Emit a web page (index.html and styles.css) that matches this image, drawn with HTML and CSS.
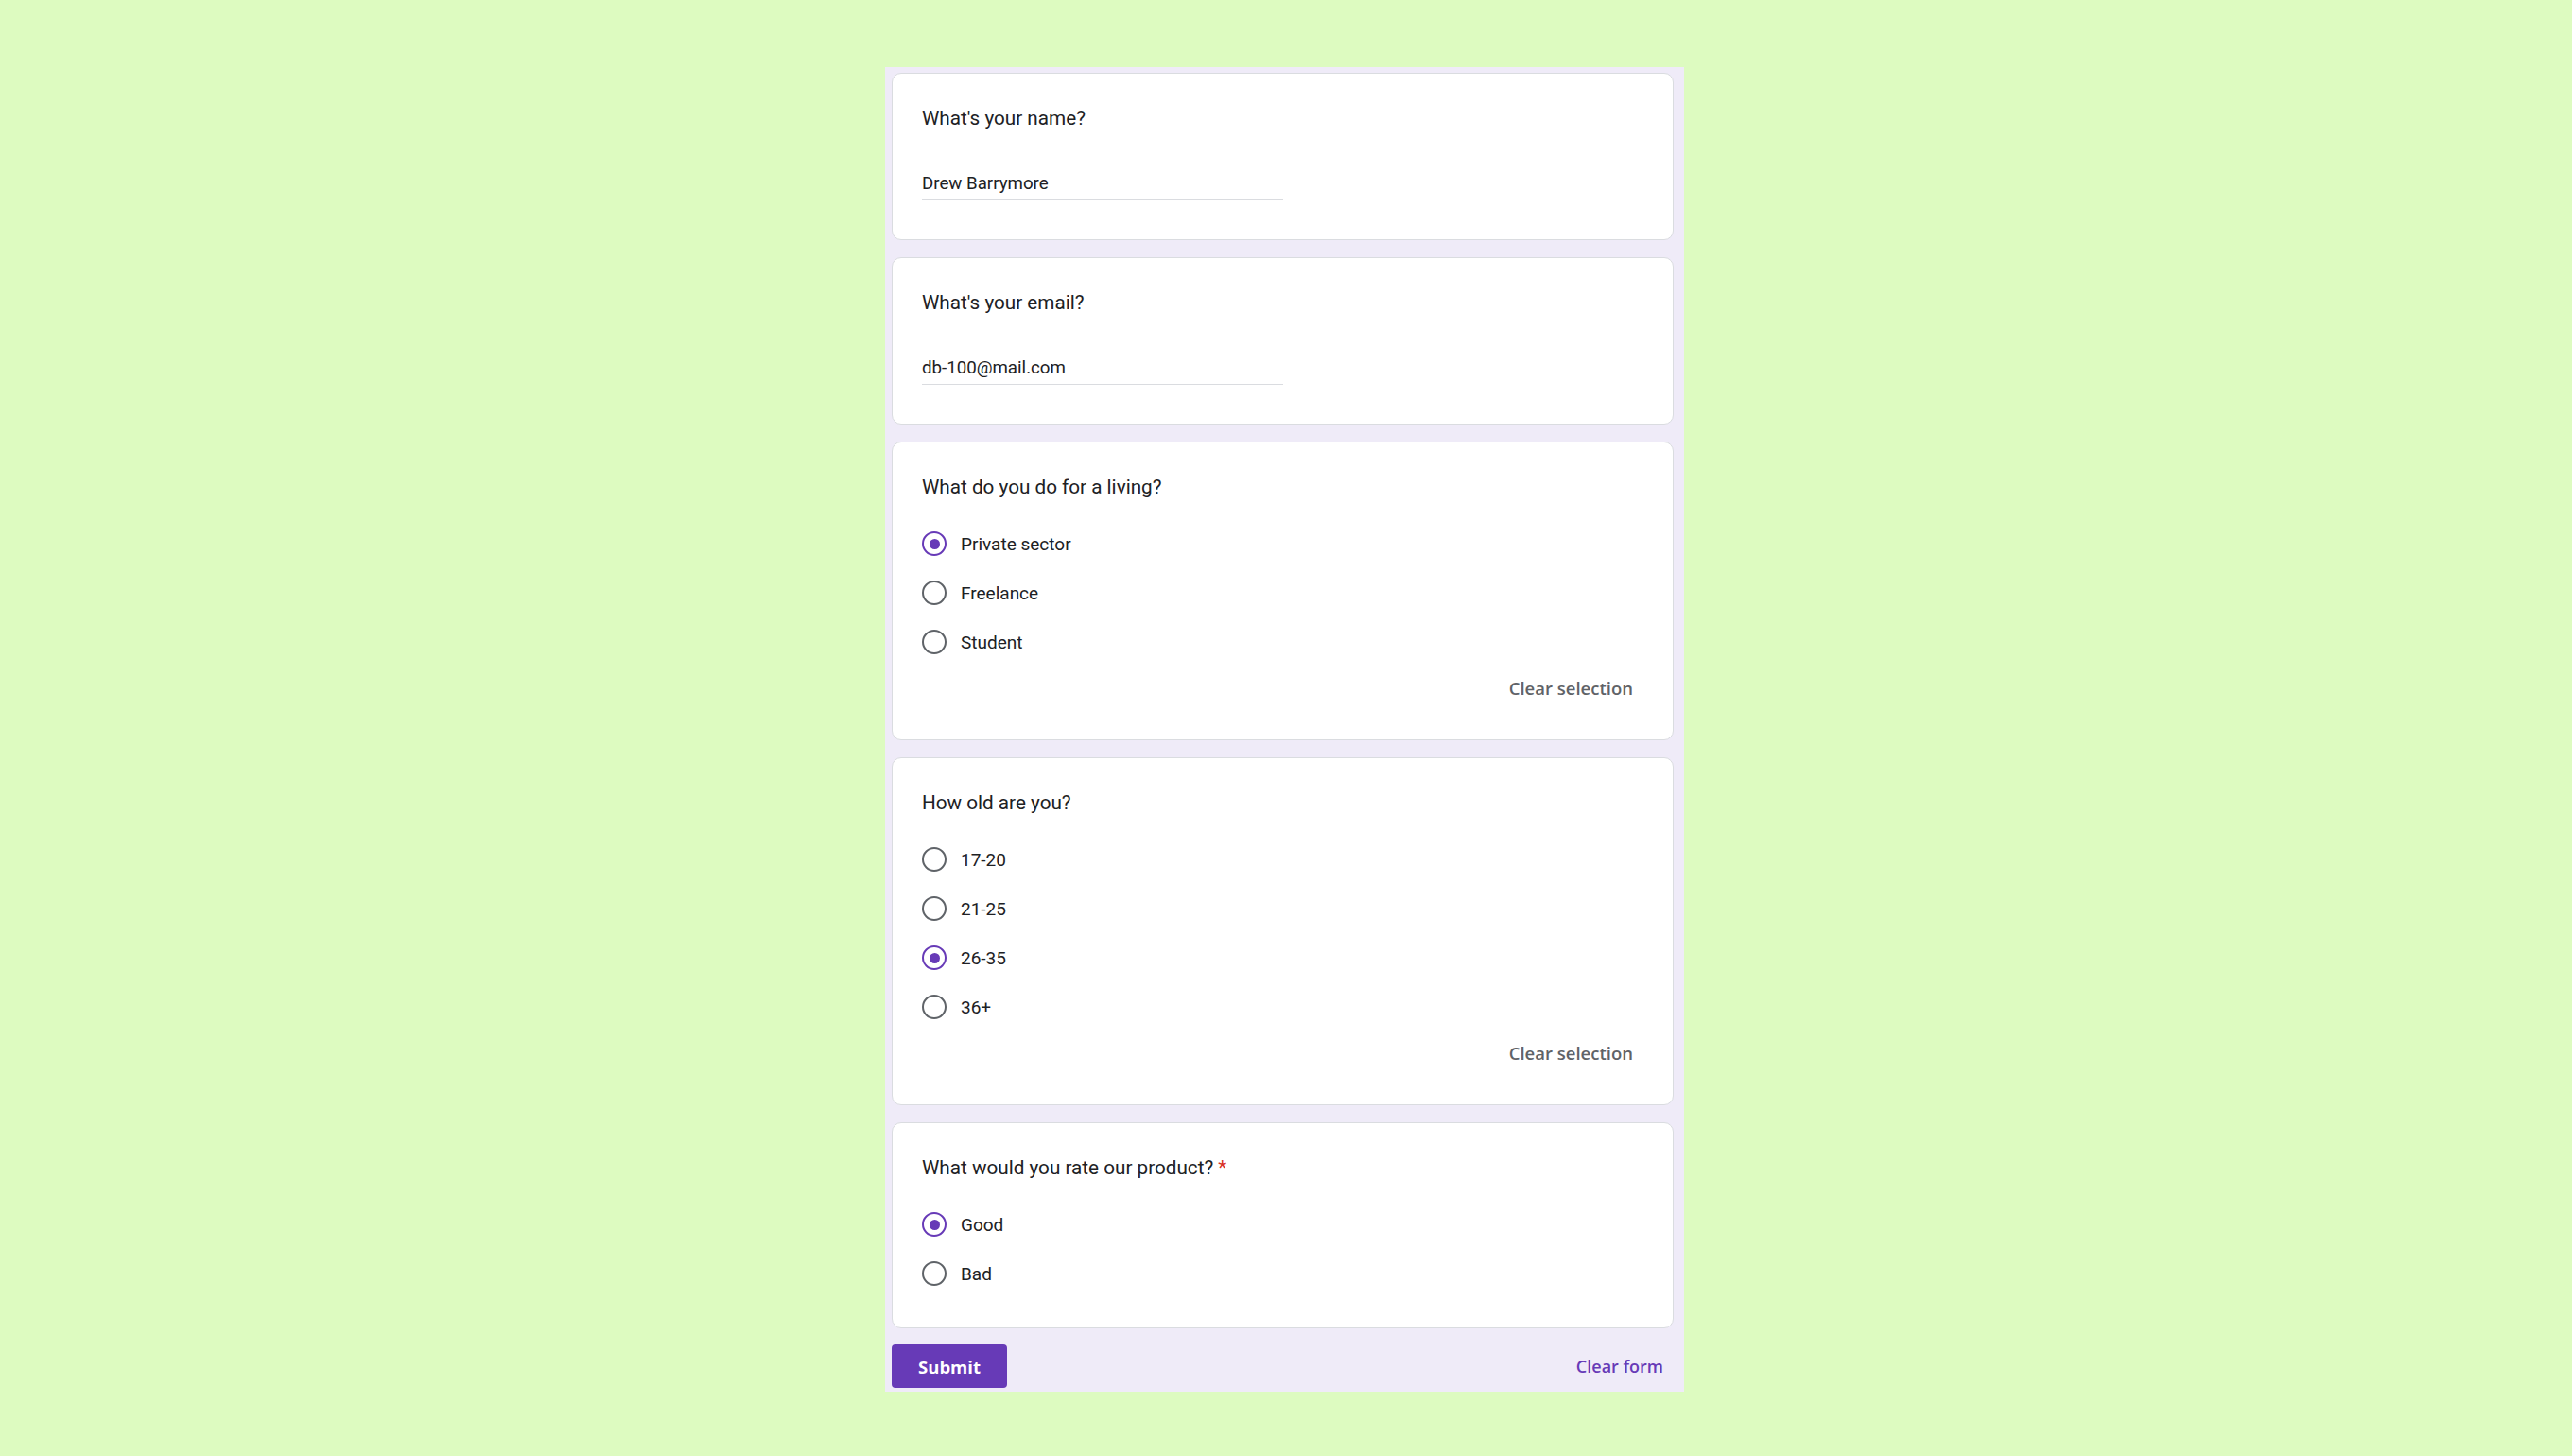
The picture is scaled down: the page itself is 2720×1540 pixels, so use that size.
FILE: index.html
```html
<!DOCTYPE html>
<html lang="en">
<head>
<meta charset="utf-8">
<title>Form</title>
<link rel="stylesheet" href="styles.css">
</head>
<body>
<div class="page">
  <form class="form">
    <section class="card">
      <div class="question">What's your name?</div>
      <div class="field"><span class="field-value">Drew Barrymore</span></div>
    </section>
    <section class="card">
      <div class="question">What's your email?</div>
      <div class="field"><span class="field-value">db-100@mail.com</span></div>
    </section>
    <section class="card">
      <div class="question">What do you do for a living?</div>
      <div class="options">
        <div class="option"><span class="radio checked"></span><span class="label">Private sector</span></div>
        <div class="option"><span class="radio"></span><span class="label">Freelance</span></div>
        <div class="option"><span class="radio"></span><span class="label">Student</span></div>
      </div>
      <div class="clear-row"><span class="clear-btn">Clear selection</span></div>
    </section>
    <section class="card">
      <div class="question">How old are you?</div>
      <div class="options">
        <div class="option"><span class="radio"></span><span class="label">17-20</span></div>
        <div class="option"><span class="radio"></span><span class="label">21-25</span></div>
        <div class="option"><span class="radio checked"></span><span class="label">26-35</span></div>
        <div class="option"><span class="radio"></span><span class="label">36+</span></div>
      </div>
      <div class="clear-row"><span class="clear-btn">Clear selection</span></div>
    </section>
    <section class="card">
      <div class="question">What would you rate our product? <span class="required">*</span></div>
      <div class="options">
        <div class="option"><span class="radio checked"></span><span class="label">Good</span></div>
        <div class="option"><span class="radio"></span><span class="label">Bad</span></div>
      </div>
    </section>
    <div class="footer">
      <button type="button" class="submit">Submit</button>
      <span class="clear-form">Clear form</span>
    </div>
  </form>
</div>
</body>
</html>
```

FILE: styles.css
```css
html, body {
  margin: 0;
  padding: 0;
}
body {
  background: #ddfbc0;
  min-height: 100vh;
  font-family: Roboto, "Liberation Sans", Arial, sans-serif;
  color: #202124;
}
.page {
  display: flex;
  justify-content: center;
  padding: 71px 3px 0 0;
}
.form {
  width: 845px;
  box-sizing: border-box;
  background: #efebf8;
  padding: 6px 11px 4px 7px;
  display: flex;
  flex-direction: column;
  gap: 18px;
}
.card {
  background: #ffffff;
  border: 1px solid #dadce0;
  border-radius: 10px;
  padding: 35px 31px 31px;
}
.question {
  font-size: 20.7px;
  line-height: 24px;
  color: #202124;
}
.required {
  color: #d93025;
}
.field {
  margin-top: 45px;
  margin-bottom: 10px;
  width: 50%;
  line-height: 24px;
  padding-bottom: 5px;
  border-bottom: 1px solid #dadce0;
  font-size: 18.7px;
  color: #202124;
}
.options {
  margin-top: 22px;
  display: flex;
  flex-direction: column;
}
.option {
  height: 52px;
  display: flex;
  align-items: center;
  gap: 15px;
  font-size: 19px;
}
.radio {
  width: 26px;
  height: 26px;
  box-sizing: border-box;
  border: 2px solid #5f6368;
  border-radius: 50%;
  display: flex;
  align-items: center;
  justify-content: center;
  flex: none;
}
.radio.checked {
  border-color: #673ab7;
}
.radio.checked::after {
  content: "";
  width: 11px;
  height: 11px;
  border-radius: 50%;
  background: #673ab7;
}
.clear-row {
  display: flex;
  justify-content: flex-end;
  padding: 11px 0 11px;
}
.clear-btn {
  font-family: "Open Sans", "Liberation Sans", sans-serif;
  font-weight: 600;
  font-size: 18.5px;
  line-height: 24px;
  color: #5f6368;
  padding: 0 11px;
}
.footer {
  margin-top: -1px;
  display: flex;
  justify-content: space-between;
  align-items: center;
}
.submit {
  width: 122px;
  height: 46px;
  border: none;
  border-radius: 4px;
  background: #673ab7;
  color: #ffffff;
  font-family: "Open Sans", "Liberation Sans", sans-serif;
  font-weight: 700;
  font-size: 18.5px;
  padding: 0;
}
.clear-form {
  font-family: "Open Sans", "Liberation Sans", sans-serif;
  font-weight: 600;
  font-size: 18px;
  color: #673ab7;
  padding: 0 11px;
}
```
